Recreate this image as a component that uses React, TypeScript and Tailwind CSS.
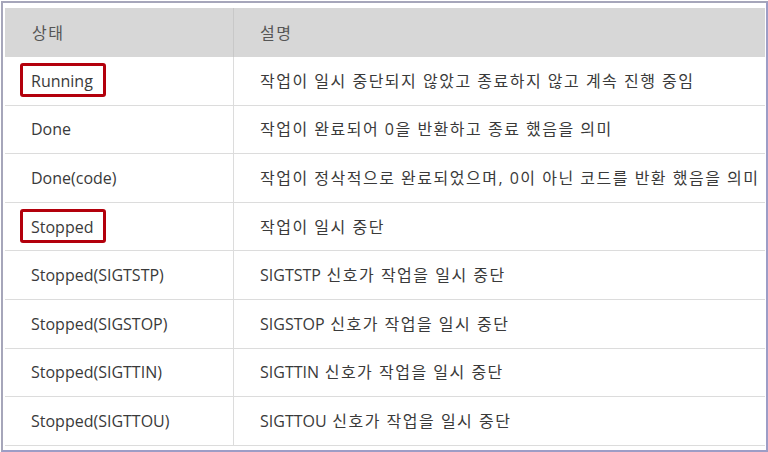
import React from "react";

const rows: { s: string; d: string; mark?: boolean }[] = [
  { s: "Running", d: "작업이 일시 중단되지 않았고 종료하지 않고 계속 진행 중임", mark: true },
  { s: "Done", d: "작업이 완료되어 0을 반환하고 종료 했음을 의미" },
  { s: "Done(code)", d: "작업이 정삭적으로 완료되었으며, 0이 아닌 코드를 반환 했음을 의미" },
  { s: "Stopped", d: "작업이 일시 중단", mark: true },
  { s: "Stopped(SIGTSTP)", d: "SIGTSTP 신호가 작업을 일시 중단" },
  { s: "Stopped(SIGSTOP)", d: "SIGSTOP 신호가 작업을 일시 중단" },
  { s: "Stopped(SIGTTIN)", d: "SIGTTIN 신호가 작업을 일시 중단" },
  { s: "Stopped(SIGTTOU)", d: "SIGTTOU 신호가 작업을 일시 중단" },
];

function Desc({ text }: { text: string }) {
  const parts = text.split(/([A-Za-z]+)/);
  return (
    <>
      {parts.map((p, i) =>
        /^[A-Za-z]+$/.test(p) ? (
          <span key={i} className="tracking-normal">{p}</span>
        ) : (
          <span key={i}>{p}</span>
        )
      )}
    </>
  );
}

export default function App() {
  return (
    <div
      className="w-[768px] h-[452px] bg-white pt-[1px] pl-[1px]"
      style={{ fontFamily: '"Open Sans", "Noto Sans CJK KR", sans-serif' }}
    >
      <div className="w-[767px] h-[451px] border-2 border-[#a6a6ba] border-r-[#9d9dc6] border-b-[#9d9dc6] pt-[5px] pl-[2px]">
        <div className="w-[760px] text-[16px] text-[#3a3a3a]">
          <div className="flex h-[49px] bg-[#d7d7d7] text-[#555]">
            <div className="w-[229px] border-r border-[#c8c8c8] flex items-center pl-[27px] tracking-[1.5px]">상태</div>
            <div className="flex-1 flex items-center pl-[26px] tracking-[1.5px]">설명</div>
          </div>
          {rows.map((r) => (
            <div key={r.s} className="flex h-[48.6px] border-b border-[#dcdcdc]">
              <div className="relative w-[229px] border-r border-[#dcdcdc] flex items-center pl-[26px]">
                {r.mark && (
                  <div className="absolute left-[15px] top-[6px] w-[86px] h-[34px] border-[3px] border-[#b3000c] rounded-[3px]" />
                )}
                <span>{r.s}</span>
              </div>
              <div className="flex-1 flex items-center pl-[26px] whitespace-nowrap tracking-[1.5px]">
                <span>
                  <Desc text={r.d} />
                </span>
              </div>
            </div>
          ))}
        </div>
      </div>
    </div>
  );
}
